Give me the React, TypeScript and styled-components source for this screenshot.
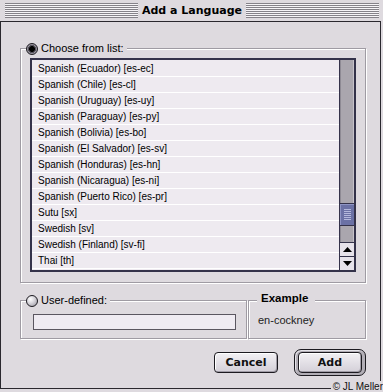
import React from "react";
import styled, { createGlobalStyle } from "styled-components";

const BG = "#dedadf";
const DARK = "#34324a";

const GlobalStyle = createGlobalStyle`
  html, body { margin: 0; padding: 0; background: ${BG}; }
  body {
    width: 383px;
    height: 392px;
    overflow: hidden;
    position: relative;
    font-family: "Liberation Sans", Arial, sans-serif;
  }
`;

const Window = styled.div`
  width: 381px;
  height: 389px;
  display: flex;
  flex-direction: column;
  background: ${BG};
`;

const TitleBar = styled.div`
  height: 21px;
  box-sizing: border-box;
  padding: 3px 2px 3px 5px;
  display: flex;
  align-items: flex-start;
`;

const Stripes = styled.div`
  flex: 1;
  height: 15px;
  background: repeating-linear-gradient(to bottom, #858289 0 1px, #f6f4f7 1px 2px);
`;

const Title = styled.div`
  padding: 0 4px;
  font-family: "DejaVu Sans", sans-serif;
  font-weight: bold;
  font-size: 11px;
  line-height: 15px;
  color: #000;
  white-space: nowrap;
`;

const Body = styled.div`
  flex: 1;
  box-sizing: border-box;
  border: 1px solid #2a282e;
  padding: 26px 14px 0 19px;
  display: flex;
  flex-direction: column;
`;

const Group = styled.div<{ $w: number; $h: number; $ml?: number }>`
  box-sizing: border-box;
  width: ${(p) => p.$w}px;
  height: ${(p) => p.$h}px;
  margin-left: ${(p) => p.$ml ?? 0}px;
  border: 1px solid #9f9ba3;
  box-shadow: inset 1px 1px 0 #fff, 1px 1px 0 #fff;
  display: flex;
  flex-direction: column;
  align-items: flex-start;
`;

const GroupHeader = styled.div<{ $mt?: number; $ml?: number }>`
  display: flex;
  align-items: center;
  gap: 3px;
  height: 13px;
  margin-top: ${(p) => p.$mt ?? -7}px;
  margin-left: ${(p) => p.$ml ?? 5}px;
  padding: 0 3px 0 0;
  background: ${BG};
  font-size: 11px;
  line-height: 13px;
  color: #000;
  white-space: nowrap;
`;

const HeaderTitle = styled.span`
  padding: 0 4px;
  font-weight: bold;
  font-size: 11.5px;
`;

const Radio = styled.span<{ $on?: boolean }>`
  box-sizing: border-box;
  width: 12px;
  height: 12px;
  border-radius: 50%;
  border: 1px solid #1c1a20;
  background: ${(p) =>
    p.$on
      ? "radial-gradient(circle, #000 0 2.6px, #55525c 3.2px 3.8px, #9a96a0 4.3px)"
      : "radial-gradient(circle at 35% 32%, #ffffff 0, #dcdae0 38%, #95929c 100%)"};
`;

const ListBox = styled.div`
  box-sizing: border-box;
  width: 326px;
  height: 214px;
  margin: 3px 0 0 9px;
  border: 2px solid ${DARK};
  background: #eeeaf0;
  display: flex;
`;

const Rows = styled.div`
  flex: 1;
  padding-top: 1px;
  display: flex;
  flex-direction: column;
  overflow: hidden;
`;

const Row = styled.div`
  box-sizing: border-box;
  height: 16px;
  flex: none;
  border-bottom: 1px solid #ffffff;
  padding: 1px 0 0 6px;
  font-size: 10px;
  line-height: 14px;
  color: #000;
  white-space: nowrap;
`;

const ScrollBar = styled.div`
  box-sizing: border-box;
  width: 15px;
  border-left: 1px solid ${DARK};
  display: flex;
  flex-direction: column;
`;

const Track = styled.div`
  flex: 1;
  background: #aaa6ae;
  box-shadow: inset 1px 0 0 #8e8a94, inset -1px 0 0 #c6c2ca;
  display: flex;
  flex-direction: column;
`;

const Thumb = styled.div<{ $top: number }>`
  box-sizing: border-box;
  height: 23px;
  margin-top: ${(p) => p.$top}px;
  background: #6b71a5;
  border-top: 1px solid ${DARK};
  border-bottom: 1px solid ${DARK};
  box-shadow: inset 1px 1px 0 #8e94c4;
  display: flex;
  align-items: center;
  justify-content: center;
`;

const ArrowBtn = styled.div`
  box-sizing: border-box;
  height: 14px;
  flex: none;
  background: #e6e2ea;
  border-top: 1px solid ${DARK};
  display: flex;
  align-items: center;
  justify-content: center;
`;

const BottomRow = styled.div`
  display: flex;
  margin-top: 17px;
`;

const TextInput = styled.div`
  box-sizing: border-box;
  width: 203px;
  height: 16px;
  margin: 7px 0 0 12px;
  border: 1px solid #5a5660;
  background: #efebf2;
`;

const ExampleText = styled.div`
  margin: 9px 0 0 9px;
  font-size: 11px;
  line-height: 13px;
  color: #222;
`;

const ButtonRow = styled.div`
  display: flex;
  justify-content: flex-end;
  align-items: center;
  gap: 16px;
  margin-top: 10px;
`;

const Button = styled.div`
  box-sizing: border-box;
  width: 64px;
  height: 21px;
  border: 1px solid #1c1a20;
  border-radius: 4px;
  background: linear-gradient(#f2f0f4, #d4d0d8);
  box-shadow: inset 1px 1px 0 #fff, inset -1px -1px 0 #a09ca6;
  display: flex;
  align-items: center;
  justify-content: center;
  font-family: "DejaVu Sans", sans-serif;
  font-weight: bold;
  font-size: 11px;
  color: #111;
`;

const DefaultRing = styled.div`
  box-sizing: border-box;
  padding: 2px 3px;
  border: 1px solid #1c1a20;
  border-radius: 7px;
  background: #b2aeb6;
  box-shadow: inset 1px 1px 0 #e4e2e8;
  display: flex;
`;

const Copyright = styled.div`
  position: absolute;
  right: 0;
  bottom: 0;
  padding-left: 2px;
  background: ${BG};
  font-size: 10px;
  line-height: 11px;
  color: #111;
  white-space: nowrap;
`;

const languages = [
  "Spanish (Ecuador) [es-ec]",
  "Spanish (Chile) [es-cl]",
  "Spanish (Uruguay) [es-uy]",
  "Spanish (Paraguay) [es-py]",
  "Spanish (Bolivia) [es-bo]",
  "Spanish (El Salvador) [es-sv]",
  "Spanish (Honduras) [es-hn]",
  "Spanish (Nicaragua) [es-ni]",
  "Spanish (Puerto Rico) [es-pr]",
  "Sutu [sx]",
  "Swedish [sv]",
  "Swedish (Finland) [sv-fi]",
  "Thai [th]",
];

const Grip = () => (
  <svg width="7" height="11" viewBox="0 0 7 11">
    {[0, 2, 4, 6, 8, 10].map((y) => (
      <rect key={y} x="0" y={y} width="7" height="1" fill="#b4b8dc" />
    ))}
  </svg>
);

const Arrow = ({ up }: { up?: boolean }) => (
  <svg width="9" height="5" viewBox="0 0 9 5">
    <polygon points={up ? "4.5,0 9,5 0,5" : "0,0 9,0 4.5,5"} fill="#000" />
  </svg>
);

export default function App() {
  return (
    <>
      <GlobalStyle />
      <Window>
        <TitleBar>
          <Stripes />
          <Title>Add a Language</Title>
          <Stripes />
        </TitleBar>
        <Body>
          <Group $w={346} $h={235}>
            <GroupHeader>
              <Radio $on />
              <span>Choose from list:</span>
            </GroupHeader>
            <ListBox>
              <Rows>
                {languages.map((l) => (
                  <Row key={l}>{l}</Row>
                ))}
              </Rows>
              <ScrollBar>
                <Track>
                  <Thumb $top={143}>
                    <Grip />
                  </Thumb>
                </Track>
                <ArrowBtn>
                  <Arrow up />
                </ArrowBtn>
                <ArrowBtn>
                  <Arrow />
                </ArrowBtn>
              </ScrollBar>
            </ListBox>
          </Group>
          <BottomRow>
            <Group $w={227} $h={39}>
              <GroupHeader>
                <Radio />
                <span>User-defined:</span>
              </GroupHeader>
              <TextInput />
            </Group>
            <Group $w={118} $h={39} $ml={1}>
              <GroupHeader $mt={-9} $ml={8}>
                <HeaderTitle>Example</HeaderTitle>
              </GroupHeader>
              <ExampleText>en-cockney</ExampleText>
            </Group>
          </BottomRow>
          <ButtonRow>
            <Button>Cancel</Button>
            <DefaultRing>
              <Button>Add</Button>
            </DefaultRing>
          </ButtonRow>
        </Body>
      </Window>
      <Copyright>© JL Meller</Copyright>
    </>
  );
}
